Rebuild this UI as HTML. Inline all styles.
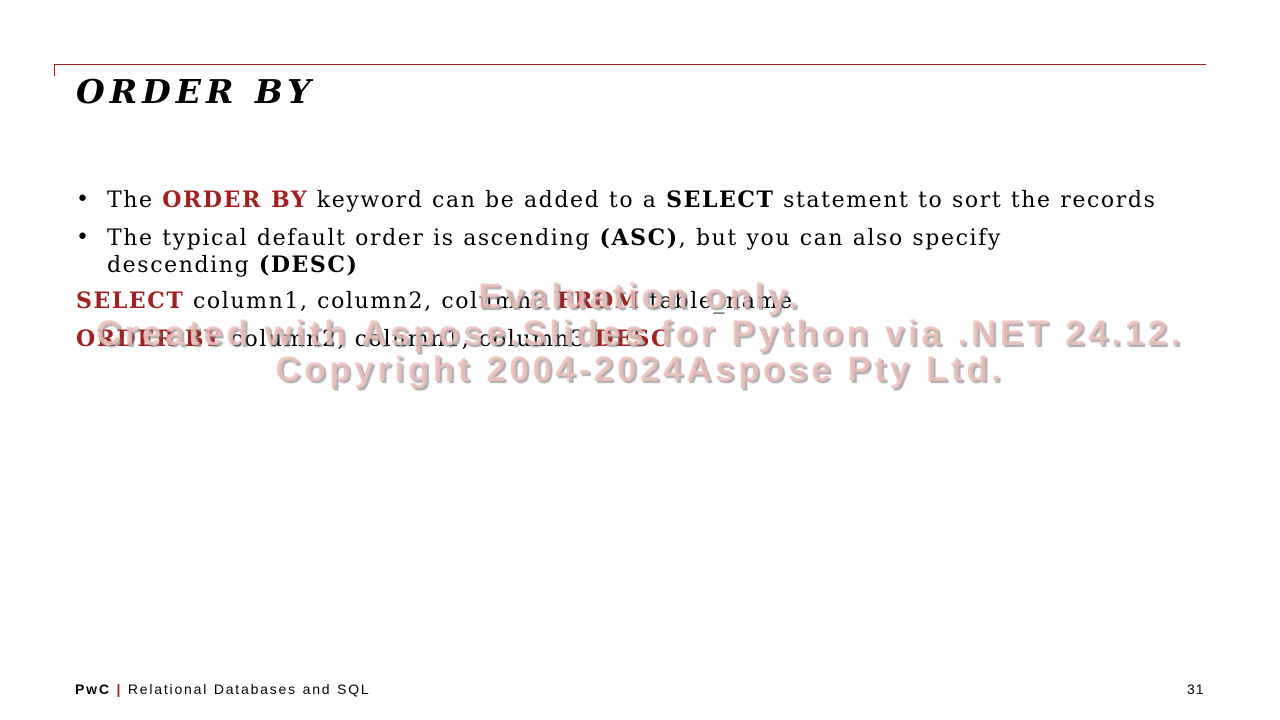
<!DOCTYPE html>
<html><head><meta charset="utf-8"><style>
body{margin:0;width:1280px;height:720px;background:#fff;position:relative;overflow:hidden;font-family:"DejaVu Serif",serif}
.a{position:absolute;white-space:nowrap}
.r{color:#a32020;font-weight:bold}
.b{font-weight:bold}
.t{font-size:22px;letter-spacing:1.6px}
.wm{position:absolute;left:0;width:1280px;text-align:center;font-family:"Liberation Sans",sans-serif;font-weight:bold;font-size:35px;letter-spacing:3.6px;color:rgba(235,190,185,0.85);text-shadow:2px 2px 1px rgba(120,120,120,0.6);white-space:nowrap}
</style></head><body>
<div class="a" style="left:54px;top:64px;width:1152px;height:1px;background:#a32020"></div>
<div class="a" style="left:54px;top:64px;width:1px;height:12px;background:#a32020"></div>
<div class="a" style="left:76px;top:72px;font-size:33px;font-weight:bold;font-style:italic;letter-spacing:5px">ORDER BY</div>
<div class="a t" style="left:76px;top:187px">•</div>
<div class="a t" style="left:107px;top:187px">The <span class="r">ORDER BY</span> keyword can be added to a <span class="b">SELECT</span> statement to sort the records</div>
<div class="a t" style="left:76px;top:225px">•</div>
<div class="a t" style="left:107px;top:225px;line-height:27px">The typical default order is ascending <span class="b">(ASC)</span>, but you can also specify<br>descending <span class="b">(DESC)</span></div>
<div class="a t" style="left:76px;top:288px"><span class="r">SELECT</span> column1, column2, column3 <span class="r">FROM</span> table_name</div>
<div class="a t" style="left:76px;top:326px"><span class="r">ORDER BY</span> column2, column1, column3 <span class="r">DESC</span></div>
<div class="wm" style="top:277px">Evaluation only.</div>
<div class="wm" style="top:314px">Created with Aspose.Slides for Python via .NET 24.12.</div>
<div class="wm" style="top:350px">Copyright 2004-2024Aspose Pty Ltd.</div>
<div class="a" style="left:75px;top:681px;font-family:'Liberation Sans',sans-serif;font-size:14px;letter-spacing:1.8px"><b>PwC</b> <span style="color:#a32020;font-weight:bold">|</span> Relational Databases and SQL</div>
<div class="a" style="left:1187px;top:681px;font-family:'Liberation Sans',sans-serif;font-size:14px;letter-spacing:1px">31</div>
</body></html>
